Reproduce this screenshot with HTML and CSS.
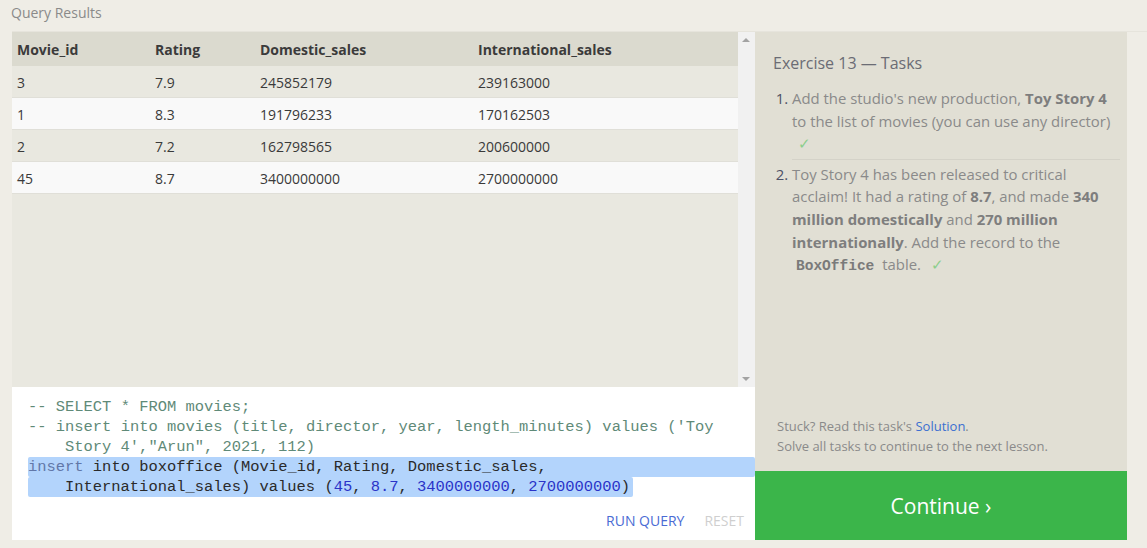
FILE: index.html
```html
<!DOCTYPE html>
<html>
<head>
<meta charset="utf-8">
<link rel="stylesheet" href="styles.css">
</head>
<body>
<div class="page">
  <div class="label">Query Results</div>
  <div class="main">
    <div class="left">
      <div class="results">
        <div class="table-wrap">
          <table class="grid">
            <thead>
              <tr><th class="c1">Movie_id</th><th class="c2">Rating</th><th class="c3">Domestic_sales</th><th class="c4">International_sales</th></tr>
            </thead>
            <tbody>
              <tr><td>3</td><td>7.9</td><td>245852179</td><td>239163000</td></tr>
              <tr><td>1</td><td>8.3</td><td>191796233</td><td>170162503</td></tr>
              <tr><td>2</td><td>7.2</td><td>162798565</td><td>200600000</td></tr>
              <tr><td>45</td><td>8.7</td><td>3400000000</td><td>2700000000</td></tr>
            </tbody>
          </table>
        </div>
        <div class="scrollbar">
          <span class="arrow up"></span>
          <span class="arrow down"></span>
        </div>
      </div>
      <div class="editor">
        <div class="code">
          <div class="ln cm">-- SELECT * FROM movies;</div>
          <div class="ln cm">-- insert into movies (title, director, year, length_minutes) values ('Toy</div>
          <div class="ln cm wrap">Story 4',"Arun", 2021, 112)</div>
          <div class="ln sel"><span class="kw">insert</span> into boxoffice (Movie_id, Rating, Domestic_sales,</div>
          <div class="ln sel part wrap">International_sales) values (<span class="num">45</span>, <span class="num">8.7</span>, <span class="num">3400000000</span>, <span class="num">2700000000</span>)</div>
        </div>
        <div class="actions">
          <span class="run">RUN QUERY</span>
          <span class="reset">RESET</span>
        </div>
      </div>
    </div>
    <div class="right">
      <div class="tasks">
        <div class="title">Exercise 13 — Tasks</div>
        <ol class="list">
          <li class="item">Add the studio's new production, <b>Toy Story 4</b><br>to the list of movies (you can use any director)<br><span class="check">✓</span></li>
          <li class="item">Toy Story 4 has been released to critical<br>acclaim! It had a rating of <b>8.7</b>, and made <b>340</b><br><b>million domestically</b> and <b>270 million</b><br><b>internationally</b>. Add the record to the<br><code class="tbl">BoxOffice</code> table. <span class="check">✓</span></li>
        </ol>
        <div class="help">
          <div>Stuck? Read this task's <span class="link">Solution</span>.</div>
          <div>Solve all tasks to continue to the next lesson.</div>
        </div>
      </div>
      <div class="continue">Continue ›</div>
    </div>
  </div>
</div>
</body>
</html>
```
FILE: styles.css
```css
html, body {
  margin: 0;
  padding: 0;
  background: #efede6;
}
body {
  font-family: "Open Sans", "Noto Sans", sans-serif;
  color: #333;
}
.page {
  width: 1147px;
  height: 548px;
  overflow: hidden;
}
.label {
  height: 31px;
  padding-left: 11px;
  font-size: 14px;
  line-height: 26px;
  color: #8a8a8a;
}
.main {
  display: flex;
  margin-left: 12px;
  border-top: 1px solid #e6e4dc;
}
.left {
  width: 743px;
  display: flex;
  flex-direction: column;
}
.results {
  height: 355px;
  display: flex;
  background: #e9e8e0;
}
.table-wrap {
  flex: 1;
}
.grid {
  width: 100%;
  border-collapse: collapse;
  font-size: 14px;
  table-layout: fixed;
}
.grid th {
  background: #dbdacf;
  text-align: left;
  font-weight: 700;
  height: 34px;
  padding: 0 0 0 5px;
  color: #3b3b3b;
}
.grid th.c1 { width: 133px; }
.grid th.c2 { width: 100px; }
.grid th.c3 { width: 213px; }
.grid td {
  height: 30px;
  padding: 1px 0 0 5px;
  border-bottom: 1px solid #e0dfd8;
  color: #3a3a3a;
}
.grid tbody tr:nth-child(odd) td { background: #e9e8e0; }
.grid tbody tr:nth-child(even) td { background: #f9f9f9; }
.scrollbar {
  width: 17px;
  background: #f1f1f1;
  position: relative;
}
.arrow {
  position: absolute;
  left: 4px;
  width: 0;
  height: 0;
  border-left: 4px solid transparent;
  border-right: 4px solid transparent;
}
.arrow.up { top: 6px; border-bottom: 4px solid #a3a3a3; }
.arrow.down { bottom: 6px; border-top: 4px solid #a3a3a3; }
.editor {
  height: 153px;
  background: #fff;
  display: flex;
  flex-direction: column;
}
.code {
  padding: 10px 0 0 16px;
  font-family: "Liberation Mono", "DejaVu Sans Mono", monospace;
  font-size: 15.45px;
  line-height: 20px;
  color: #2a2a2a;
  flex: 1;
}
.ln {
  white-space: pre;
  height: 20px;
}
.ln.cm { color: #5f8a78; }
.ln.wrap { padding-left: 37px; }
.ln.sel { background: #b3d4fc; border-radius: 2px; }
.ln.part { width: fit-content; padding-right: 3px; }
.kw { color: #6177a8; }
.num { color: #2a33c8; }
.actions {
  display: flex;
  justify-content: flex-end;
  gap: 20px;
  padding: 0 11px 9px 0;
  font-size: 14px;
  line-height: 20px;
}
.run { color: #4a6bd4; }
.reset { color: #cfcfcf; }
.right {
  width: 372px;
  display: flex;
  flex-direction: column;
}
.tasks {
  height: 439px;
  background: #e1dfd4;
  display: flex;
  flex-direction: column;
  padding: 0 7px 0 18px;
}
.title {
  font-size: 16px;
  color: #6b6c74;
  margin-top: 20px;
  line-height: 22px;
}
.list {
  margin: 13px 0 0 0;
  padding: 0 0 0 19px;
  font-size: 14.9px;
  line-height: 22.6px;
  color: #8a8a8a;
}
.list li::marker { color: #4e5166; }
.list b { color: #7e7e7e; }
.item + .item {
  border-top: 1px solid #d4d2c8;
  margin-top: 4px;
  padding-top: 3px;
}
.check {
  color: #8cce8c;
  margin-left: 6px;
}
.tbl {
  font-family: "Liberation Mono", "DejaVu Sans Mono", monospace;
  font-weight: 700;
  font-size: 14.5px;
  color: #7a7a7a;
  padding: 0 4px;
}
.help {
  margin-top: auto;
  margin-bottom: 15px;
  padding-left: 4px;
  font-size: 13px;
  line-height: 20px;
  color: #8a8a8a;
}
.link { color: #3b6fd0; }
.continue {
  height: 69px;
  background: #3bb54a;
  color: #fff;
  font-size: 21px;
  display: flex;
  align-items: center;
  justify-content: center;
}
```
